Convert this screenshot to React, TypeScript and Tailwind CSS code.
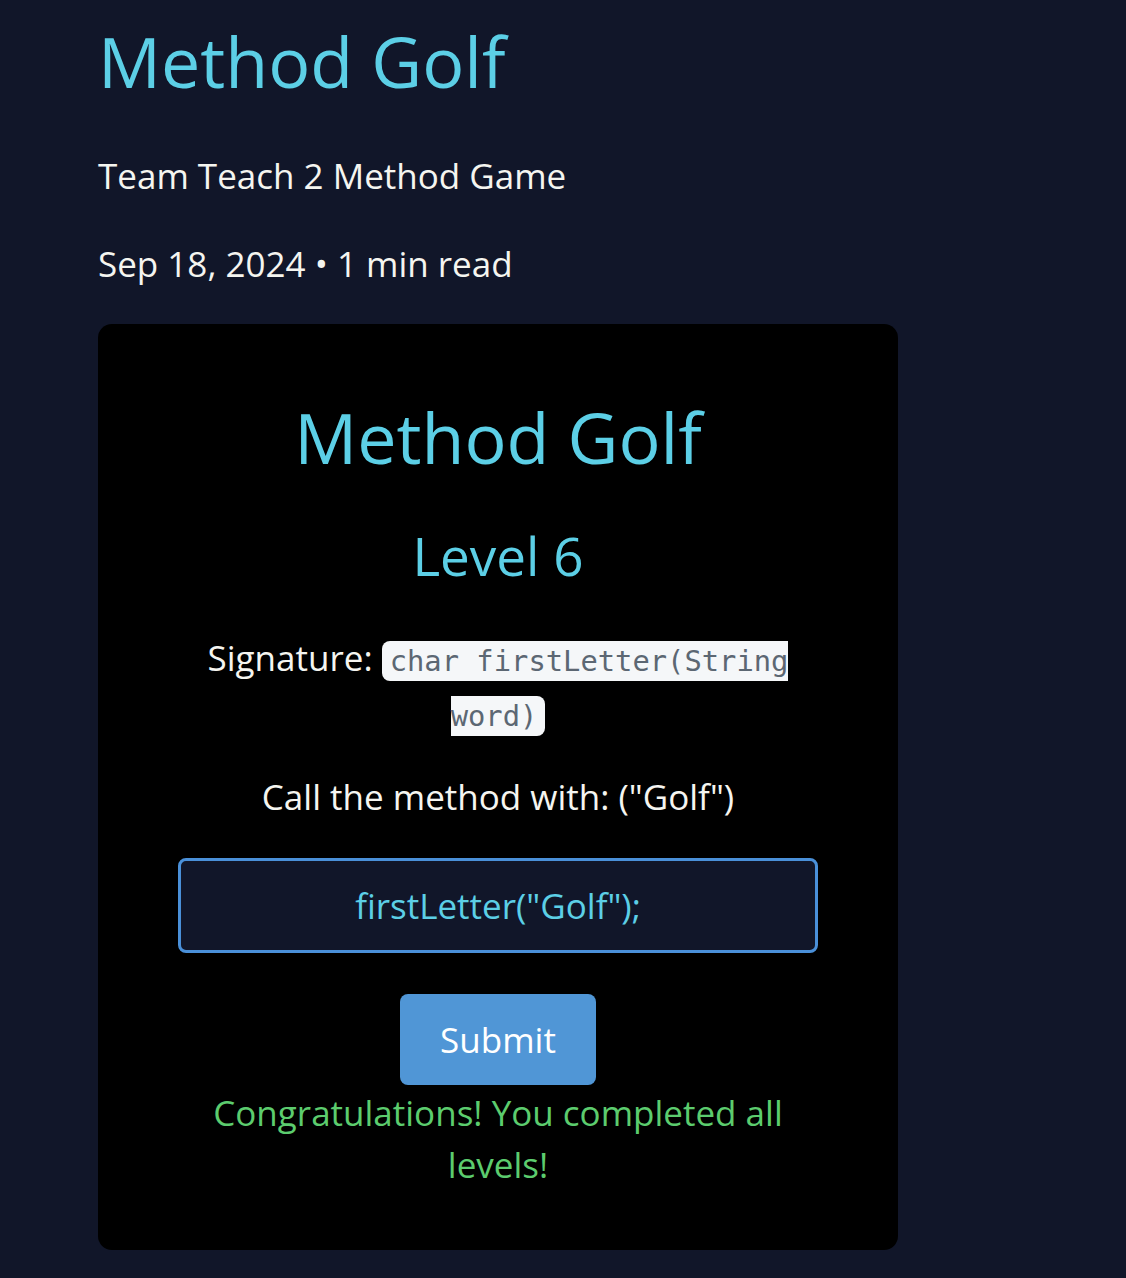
export default function App() {
  return (
    <div className="min-h-[1278px] bg-[#111629] font-['Open_Sans',sans-serif] text-[#f5f5f0]">
      <div className="pl-[98px] pt-[18px]">

        <h1 className="text-[70px] leading-[1.25] text-[#5ccfe6]">
          Method Golf
        </h1>

        <p className="mt-[44px] text-[35px] leading-[52px]">
          Team Teach 2 Method Game
        </p>

        <p className="mt-[36px] text-[35px] leading-[52px]">
          Sep 18, 2024 • 1 min read
        </p>

        <div className="mt-[34px] w-[800px] rounded-[14px] bg-black px-[80px] pt-[70px] pb-[59px] text-center">

          <h2 className="text-[70px] leading-[1.25] text-[#5ccfe6]">
            Method Golf
          </h2>

          <h3 className="mt-[42px] text-[53px] leading-[1.25] text-[#5ccfe6]">
            Level 6
          </h3>

          <p className="mt-[43px] text-[35px] leading-[52px]">
            Signature:{" "}
            <code className="rounded-[8px] bg-[#f5f7f9] px-[8px] py-[3px] font-['DejaVu_Sans_Mono',monospace] text-[28.8px] text-[#5c6773]">
              char firstLetter(String word)
            </code>
          </p>

          <p className="mt-[29px] text-[35px] leading-[52px]">
            Call the method with: ("Golf")
          </p>

          <div className="mt-[35px] flex h-[95px] items-center justify-center rounded-[8px] border-[3px] border-[#4a90d9] bg-[#111629] text-[35px] text-[#5ccfe6]">
            firstLetter("Golf");
          </div>

          <button className="mt-[41px] h-[91px] w-[196px] rounded-[8px] bg-[#5096d6] text-[35px] text-white">
            Submit
          </button>

          <p className="mt-[2px] text-[35px] leading-[52px] text-[#5ccc6e]">
            Congratulations! You completed all levels!
          </p>

        </div>

      </div>
    </div>
  );
}
